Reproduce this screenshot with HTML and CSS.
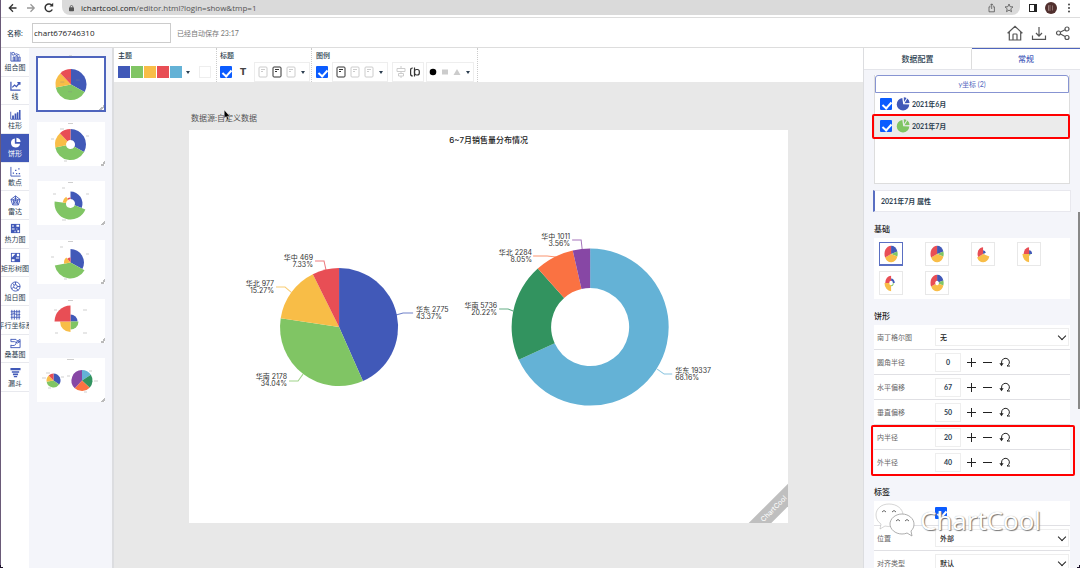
FILE: index.html
```
<!DOCTYPE html>
<html lang="zh-CN">
<head>
<meta charset="utf-8">
<title>ChartCool</title>
<link rel="stylesheet" href="styles.css">
</head>
<body>
<svg class="defs" aria-hidden="true">
  <symbol id="undo" viewBox="0 0 12 10"><path d="M2.600 7.500V5A3.900 3.900 0 1 1 9.500 7.700L8 9h3" fill="none" stroke="#222" stroke-width="1"/><path d="M.4 6.300h4.200L2.500 9.300z" fill="#222"/></symbol>
  <symbol id="doc" viewBox="0 0 10 12"><rect x="1" y="1" width="8" height="10" rx="1" fill="none" stroke="currentColor"/><path d="M3 3.500h4M3 5.500h2" stroke="currentColor"/></symbol>
  <symbol id="pieicon" viewBox="0 0 14 14"><path d="M6.300 1A6.300 6.300 0 1 0 13.300 7.600L7.200 7.200z" fill="currentColor"/><path d="M7.800.3a6 6 0 0 1 2.800.8L8 5zM11.400 1.600a6 6 0 0 1 2.200 4.400L8.500 6.200z" fill="currentColor"/></symbol>
</svg>

<div class="browser">
  <svg class="nav-icons" viewBox="0 0 60 16"><g fill="none" stroke="#333" stroke-width="1.300"><path d="M16.500 8H9.500M13 4.300L9.300 8l3.700 3.700"/><path stroke="#999" d="M27 8h7M30.500 4.300L34.200 8l-3.700 3.700"/><path d="M52 5.400A3.800 3.800 0 1 0 52.300 9.500" stroke-width="1.500"/></g><path d="M49.500 6.500h3.700V2.800z" fill="#333"/></svg>
  <div class="address">
    <svg class="lock" viewBox="0 0 6 8"><rect y="3" width="6" height="5" rx="1" fill="#555"/><path d="M1.500 3.500v-1a1.500 1.500 0 0 1 3 0v1" fill="none" stroke="#555"/></svg>
    <span class="url"><b>ichartcool.com</b>/editor.html?login=show&amp;tmp=1</span>
    <svg class="addr-icons" viewBox="0 0 26 10"><g fill="none" stroke="#555" stroke-width=".8"><path d="M2.500 3.800H1v5h5.400v-5H5M3.700 6V1M2.200 2.400L3.700.8l1.500 1.600"/><path d="M21 1l1.100 2.700 2.900.2-2.200 1.900.7 2.900L21 7.100l-2.500 1.600.7-2.900L17 3.900l2.900-.2z"/></g></svg>
  </div>
  <svg class="browser-end" viewBox="0 0 60 16"><rect x="9.500" y="4.500" width="7" height="7" fill="none" stroke="#222"/><path d="M14 4h3v8h-3z" fill="#222"/><circle cx="31" cy="8" r="6" fill="#51302e"/><path d="M28 6h3M28 8h3M28 10h3M32.500 5.500v5M28.500 5.500v5" stroke="#b59a98" stroke-width=".6"/><g fill="#444"><circle cx="49" cy="4.500" r="1"/><circle cx="49" cy="8" r="1"/><circle cx="49" cy="11.500" r="1"/></g></svg>
</div>

<header class="header">
  <label class="name-label" for="name">名称:</label>
  <input class="name-input" id="name" type="text" value="chart676746310">
  <span class="saved">已经自动保存 23:17</span>
  <div class="header-actions">
    <button type="button" aria-label="首页"><svg viewBox="0 0 16 16"><path d="M.6 8.200L8 1.300l7.400 6.900M2.300 7v8h11.400V7M6 15v-5.200q0-.8.8-.8h2.400q.8 0 .8.800V15" fill="none" stroke="#555" stroke-width="1.200"/></svg></button>
    <button type="button" aria-label="下载"><svg viewBox="0 0 16 16"><path d="M8 2v9M5 8l3 3.200L11 8M1.500 10.500v3.800h13v-3.800" fill="none" stroke="#555" stroke-width="1.200"/></svg></button>
    <button type="button" aria-label="分享"><svg viewBox="0 0 16 16"><g fill="none" stroke="#555" stroke-width="1.200"><circle cx="3.500" cy="8" r="2"/><circle cx="12" cy="4" r="2"/><circle cx="12" cy="12.500" r="2"/><path d="M5.500 7l4.600-2.200M5.500 9l4.600 2.500"/></g></svg></button>
  </div>
</header>

<div class="workspace">
  <nav class="types">
    <a href="#combo"><svg viewBox="0 0 12 12"><path d="M1 1v10h10.500M3.500 11V6.500h1.500V11M6.500 11V5H8v6M9.500 11V6.500H11V11" /><circle cx="3.500" cy="3" r="1.500"/><path d="M5 4l2-1 3.500 1.500"/></svg>组合图</a>
    <a href="#line"><svg viewBox="0 0 12 12"><path stroke-width="1.400" d="M1 2v9h10.500M2.500 8l2.500-2.500 2 1.800L10.500 3M8 2.800h2.800v2.500"/></svg>线</a>
    <a href="#bar"><svg viewBox="0 0 12 12"><path d="M.8 3v8.200h11"/><path class="solid" d="M2.300 7h2v4h-2zM5 5h2v6H5zM7.500 3.500h1.700V11H7.500zM9.800 1h1.700v10H9.800z"/></svg>柱形</a>
    <a class="active" href="#pie"><svg viewBox="0 0 12 12"><path class="solid" d="M5.300 1.500A5 5 0 1 0 11 7.300H5.300zM7 .7a5 5 0 0 1 4.500 4.800H7z"/></svg>饼形</a>
    <a href="#scatter"><svg viewBox="0 0 12 12"><path d="M1 1v10h10.500"/><path class="solid" d="M3 7h1.400v1.400H3zM5.500 4H7v1.400H5.500zM6.500 7.500h1.400v1.400H6.500zM9 2.500h1.400v1.400H9zM9.500 7.500H11v1.400H9.500z"/></svg>散点</a>
    <a href="#radar"><svg viewBox="0 0 12 12"><path d="M6 1l5 3.800-1.900 6H2.900L1 4.800zM6 3.500l2.700 2-1 3.300H4.300l-1-3.300zM6 1v5M1 4.800L6 6l5-1.200M2.900 10.800L6 6l3.100 4.800"/></svg>雷达</a>
    <a href="#heat"><svg viewBox="0 0 12 12"><path class="solid" d="M1 1h10v10H1z"/><path class="hole" d="M2.500 2.500H4V4H2.500zM7 2h3v2H7zM2 6h3v1H2zM7 6h1v1H7zM5 8.500h1V10H5zM8 8h2v2H8z"/></svg>热力图</a>
    <a href="#treemap"><svg viewBox="0 0 12 12"><path class="solid" d="M1 1h10v10H1z"/><path class="hole" d="M2 2h4L2 6zM7.500 2H10v2.500H7.500zM2 8h3v2H2zM6.500 6H10v1.200H6.500z"/></svg>矩形树图</a>
    <a href="#sunburst"><svg viewBox="0 0 12 12"><circle cx="6" cy="6" r="5"/><circle cx="6" cy="6" r="2"/><path d="M6 1v3M11 6H8M7 8l2 2.500M4 7L1.500 8.500M4.500 4.500L3 2.500"/></svg>旭日图</a>
    <a href="#parallel"><svg viewBox="0 0 12 12"><path d="M2 1v10.500M4.700 1v10.500M7.400 1v10.500M10 1v10.500M.8 3h10.400M.8 6l4-1 3 1.500 3.400-.5M.8 9h10.400"/></svg><span>平行坐标系</span></a>
    <a href="#sankey"><svg viewBox="0 0 12 12"><path d="M1 1.500h5.500Q8 4 11 4M1 4h4q3 3 6 0M1 10.500h10M1 8q5 1 5.500-2T11 1.500v9M1 1v3M1 7.500V11"/></svg>桑基图</a>
    <a href="#funnel"><svg viewBox="0 0 12 12"><path class="solid" d="M.5 1h11v2.500H.5zM2 4.500h8v1.800H2zM3.200 7.200h5.600V9H3.200zM4.200 9.800h3.600v1.500H4.200z"/></svg>漏斗</a>
  </nav>

  <aside class="thumbs">
    <button type="button" class="thumb selected" aria-label="饼图"><svg viewBox="0 0 68 44"><g data-pie="34,22.500,0" data-slices="33,#4159b8,16;39,#80c564,16;16,#f8bd47,16;12,#e84e55,16"/><path class="ticks" d="M39 18h4M23 20h4M31 30h4M30 16h3M32 -7h3"/></svg></button>
    <button type="button" class="thumb" aria-label="环图"><svg viewBox="0 0 68 44"><g data-pie="33.500,22.500,4.500" data-slices="33,#4159b8,15.500;39,#80c564,15.500;16,#f8bd47,15.500;12,#e84e55,15.500"/><path class="ticks" d="M31 1.500h5M23 7h4M49 14h3M14 17h3M27 39h3"/></svg></button>
    <button type="button" class="thumb" aria-label="玫瑰环图"><svg viewBox="0 0 68 44"><g data-pie="33.500,22.500,4.500" data-slices="31,#4159b8,12;46,#80c564,16;14,#f8bd47,8;9,#e84e55,6"/><path class="ticks" d="M31 1.500h5M25 7h3M49 13h3M16 13h3M25 39h4"/></svg></button>
    <button type="button" class="thumb" aria-label="玫瑰图"><svg viewBox="0 0 68 44"><g data-pie="33.500,22.500,0" data-slices="33,#4159b8,13.500;39,#80c564,16;17,#f8bd47,6.500;11,#e84e55,5"/><path class="ticks" d="M31 1.500h5M23 7h3M49 14h3M14 17h3M27 39h3"/></svg></button>
    <button type="button" class="thumb" aria-label="等角玫瑰图"><svg viewBox="0 0 68 44"><g data-pie="33.500,22.500,0" data-slices="25,#4159b8,7;25,#80c564,8;25,#f8bd47,10.500;25,#e84e55,16"/><path class="ticks" d="M31 1.500h5M17 11h3M46 11h4M18 34h3M46 34h4"/></svg></button>
    <button type="button" class="thumb" aria-label="多饼图"><svg viewBox="0 0 68 44"><g data-pie="16.500,22.500,0" data-slices="35,#4159b8,7;37,#80c564,7;16,#f8bd47,7;12,#e84e55,7"/><g data-pie="45,22.500,0" data-slices="16,#64b2d6,10.500;21,#32935f,10.500;25,#fa7242,10.500;38,#8747a5,10.500"/><path class="ticks" d="M30 1.500h7M9 15h4M5 20h4M11 30h3M24 19h3M30 18h3M52 13h3M57 23h4M47 34h3"/></svg></button>
  </aside>

  <main class="editor">
    <div class="toolbar">
      <section class="tool-group">
        <h2>主题</h2>
        <div class="tools theme">
          <i class="swatch blue"></i><i class="swatch green"></i><i class="swatch yellow"></i><i class="swatch red"></i><i class="swatch sky"></i>
          <i class="caret"></i><i class="swatch blank"></i>
        </div>
      </section>
      <section class="tool-group title-group">
        <h2>标题</h2>
        <div class="tools">
          <input type="checkbox" checked aria-label="标题">
          <b class="letter">T</b>
          <div class="box"><svg class="faint"><use href="#doc"/></svg><svg><use href="#doc"/></svg><svg class="faint"><use href="#doc"/></svg><i class="caret"></i></div>
        </div>
      </section>
      <section class="tool-group legend-group">
        <h2>图例</h2>
        <div class="tools">
          <input type="checkbox" checked aria-label="图例">
          <div class="box"><svg><use href="#doc"/></svg><svg class="faint"><use href="#doc"/></svg><svg class="faint"><use href="#doc"/></svg><i class="caret"></i></div>
          <div class="box"><svg class="faint" viewBox="0 0 10 12"><path d="M1 2.500h8v3H1zM2.500 7.500h5v2.500h-5zM5 0v2.500M5 5.500v2M5 10v2" fill="none" stroke="currentColor"/></svg><svg viewBox="0 0 10 12"><path d="M2.800 2Q.6 2 .6 4v4q0 2 2.200 2M4.500 1.500v9" fill="none" stroke="currentColor" stroke-width="1.200"/><rect x="4.500" y="3.500" width="4.800" height="5.500" rx="2" fill="none" stroke="currentColor" stroke-width="1.200"/></svg></div>
          <div class="box shapes"><svg viewBox="0 0 10 12"><circle cx="4" cy="6" r="3.300"/></svg><svg class="faint" viewBox="0 0 10 12"><rect x="1" y="3.500" width="6" height="5" fill="currentColor"/></svg><svg class="faint" viewBox="0 0 10 12"><path d="M4 3l3.500 6h-7z" fill="currentColor"/></svg><i class="caret"></i></div>
        </div>
      </section>
    </div>

    <div class="stage">
      <p class="source">数据源:自定义数据</p>
      <svg class="cursor" viewBox="0 0 8 12"><path d="M1 0v9l2-2 1.500 4 1.500-.6L4.500 6.700H7z" fill="#000" stroke="#fff" stroke-width=".4"/></svg>
      <div class="paper">
        <svg class="chart" viewBox="0 0 599 393" role="img" aria-label="6~7月销售量分布情况">
          <text class="chart-title" x="299.500" y="13">6~7月销售量分布情况</text>
          <g data-pie="150,197,0" data-slices="43.370,#4159b8,59;34.040,#80c564,59;15.270,#f8bd47,59;7.330,#e84e55,59"/>
          <g data-pie="401,197,39" data-slices="68.160,#64b2d6,78.500;20.220,#32935f,78.500;8.050,#fa7242,78.500;3.560,#8747a5,78.500"/>
          <g class="leaders">
            <path stroke="#4159b8" d="M207 185l7-2h10"/><path stroke="#80c564" d="M114 244l-5 7h-9"/><path stroke="#f8bd47" d="M102 162l-6-5h-9"/><path stroke="#e84e55" d="M137 140l-2-9h-9"/>
            <path stroke="#64b2d6" d="M468 239l7 5h8"/><path stroke="#32935f" d="M324 181l-5-2h-9"/><path stroke="#fa7242" d="M367 127l-9-1h-14"/><path stroke="#8747a5" d="M393 119l-1-9h-9"/>
          </g>
          <g class="labels">
            <text x="227" y="182">华东 2775</text><text x="227" y="189">43.37%</text>
            <text x="486" y="243">华东 19337</text><text x="486" y="250">68.16%</text>
          </g>
          <g class="labels end">
            <text x="124" y="130">华中 469</text><text x="124" y="137">7.33%</text>
            <text x="85" y="156">华北 977</text><text x="85" y="163">15.27%</text>
            <text x="98" y="249">华南 2178</text><text x="98" y="256">34.04%</text>
            <text x="381" y="109">华中 1011</text><text x="381" y="116">3.56%</text>
            <text x="343" y="125">华北 2284</text><text x="343" y="132">8.05%</text>
            <text x="308" y="178">华南 5736</text><text x="308" y="185">20.22%</text>
          </g>
        </svg>
        <div class="ribbon"><span>ChartCool</span></div>
      </div>
    </div>
  </main>

  <aside class="panel">
    <div class="tabs"><button type="button">数据配置</button><button type="button" class="current">常规</button></div>
    <div class="panel-body">
      <div class="series">
        <button type="button" class="axis">y坐标 (2)</button>
        <label class="series-row"><input type="checkbox" checked><svg class="c-blue"><use href="#pieicon"/></svg>2021年6月</label>
        <label class="series-row marked"><input type="checkbox" checked><svg class="c-green"><use href="#pieicon"/></svg>2021年7月</label>
      </div>
      <h2 class="props">2021年7月 属性</h2>

      <h3>基础</h3>
      <div class="presets">
        <button type="button" class="selected" aria-label="样式1"><svg viewBox="0 0 24 24"><g transform="translate(2.500) scale(.8 1)" data-pie="12,12,0" data-slices="20,#4159b8,9;10,#80c564,9;38,#f8bd47,9;32,#e84e55,9"/></svg></button>
        <button type="button" aria-label="样式2"><svg viewBox="0 0 24 24"><g transform="translate(2.500) scale(.8 1)" data-pie="12,12,0" data-slices="20,#4159b8,9;10,#80c564,9;38,#f8bd47,9;32,#e84e55,9"/></svg></button>
        <button type="button" aria-label="样式3"><svg viewBox="0 0 24 24"><g transform="translate(2.500) scale(.8 1)" data-pie="12,12,0" data-slices="20,#4159b8,4;10,#80c564,2;38,#f8bd47,9;32,#e84e55,7.500"/></svg></button>
        <button type="button" aria-label="样式4"><svg viewBox="0 0 24 24"><g transform="translate(2.500) scale(.8 1)" data-pie="12,12,0" data-slices="25,#4159b8,4;25,#80c564,2;25,#f8bd47,9;25,#e84e55,7.500"/></svg></button>
        <button type="button" aria-label="样式5"><svg viewBox="0 0 24 24"><g transform="translate(2.500) scale(.8 1)" data-pie="12,12,2.500" data-slices="25,#4159b8,5;25,#80c564,3.500;25,#f8bd47,9;25,#e84e55,8"/></svg></button>
        <button type="button" aria-label="样式6"><svg viewBox="0 0 24 24"><g transform="translate(2.500) scale(.8 1)" data-pie="12,12,2.500" data-slices="20,#4159b8,9;10,#80c564,9;38,#f8bd47,9;32,#e84e55,9"/></svg></button>
      </div>

      <h3>饼形</h3>
      <div class="fields">
        <div class="field"><label for="rose">南丁格尔图</label><div class="select"><select id="rose"><option>无</option></select></div></div>
        <div class="field"><label for="corner">圆角半径</label><input id="corner" type="text" value="0"><button type="button" aria-label="增加" class="plus"></button><button type="button" aria-label="减少" class="minus"></button><button type="button" aria-label="重置" class="reset"><svg><use href="#undo"/></svg></button></div>
        <div class="field"><label for="dx">水平偏移</label><input id="dx" type="text" value="67"><button type="button" aria-label="增加" class="plus"></button><button type="button" aria-label="减少" class="minus"></button><button type="button" aria-label="重置" class="reset"><svg><use href="#undo"/></svg></button></div>
        <div class="field"><label for="dy">垂直偏移</label><input id="dy" type="text" value="50"><button type="button" aria-label="增加" class="plus"></button><button type="button" aria-label="减少" class="minus"></button><button type="button" aria-label="重置" class="reset"><svg><use href="#undo"/></svg></button></div>
        <div class="marked-fields">
          <div class="field"><label for="inner">内半径</label><input id="inner" type="text" value="20"><button type="button" aria-label="增加" class="plus"></button><button type="button" aria-label="减少" class="minus"></button><button type="button" aria-label="重置" class="reset"><svg><use href="#undo"/></svg></button></div>
          <div class="field"><label for="outer">外半径</label><input id="outer" type="text" value="40"><button type="button" aria-label="增加" class="plus"></button><button type="button" aria-label="减少" class="minus"></button><button type="button" aria-label="重置" class="reset"><svg><use href="#undo"/></svg></button></div>
        </div>
      </div>

      <h3>标签</h3>
      <div class="fields">
        <div class="field"><label class="dim" for="show">显示</label><input id="show" type="checkbox" checked></div>
        <div class="field"><label for="pos">位置</label><div class="select"><select id="pos"><option>外部</option></select></div></div>
        <div class="field"><label for="align">对齐类型</label><div class="select"><select id="align"><option>默认</option></select></div></div>
        <div class="watermark">
          <svg viewBox="0 0 42 36"><g fill="#fff" stroke="#999" stroke-width=".8"><path d="M15 2C7 2 2 7 2 13c0 4 2 7 5 9l-1 5 5-3q3 1 7 0C27 23 29 18 29 13 29 7 23 2 15 2z" stroke-opacity=".5"/><path d="M28 12c-7 0-12 5-12 10s5 10 12 10q3 0 5-1l5 3-1-5c2-2 3-4 3-7 0-5-5-10-12-10z"/></g><path d="M8 10q2-3 4 0M18 10q2-3 4 0M22 19q2-3 4 0M31 19q2-3 4 0" fill="none" stroke="#666"/></svg>
          <span>ChartCool</span>
        </div>
      </div>
    </div>
    <i class="scroll-thumb"></i>
  </aside>
</div>
<i class="corner left"></i><i class="corner right"></i>
<script src="charts.js"></script>
</body>
</html>
```
FILE: styles.css
```
* { box-sizing: border-box; }
body {
  margin: 0;
  height: 100vh;
  overflow: hidden;
  display: flex;
  flex-direction: column;
  background: #fff;
  border-left: 1px solid #6a5a78;
  color: #2c3e50;
  font: 7px/10px Lato, "Noto Sans CJK SC", sans-serif;
}
h2, h3, p { margin: 0; font-size: 7px; }
button, input, select { font: inherit; color: inherit; margin: 0; padding: 0; border: 0; background: none; }
a { color: inherit; text-decoration: none; }
svg { display: block; flex: none; }
.defs { position: absolute; width: 0; height: 0; }

.browser { flex: none; display: flex; height: 18px; padding-bottom: 2px; border-bottom: 1px solid #ddd; }
.nav-icons { width: 60px; height: 16px; margin-left: -1px; }
.address { flex: 1; display: flex; align-items: center; gap: 7px; padding: 0 6px 0 7px; margin-left: 2px; background: #dadada; border-radius: 0 0 8px 8px; }
.lock { width: 5px; height: 8px; }
.url { flex: 1; font: 8px/12px "Open Sans", sans-serif; color: #555; }
.url b { font-weight: 500; color: #222; }
.addr-icons { width: 26px; height: 10px; }
.browser-end { width: 60px; height: 16px; }

.header { flex: none; display: flex; align-items: center; height: 30px; padding: 0 9px 0 6px; border-bottom: 1px solid #ddd; }
.name-label { width: 25px; font-weight: 500; }
.name-input { width: 139px; height: 20px; padding: 0 1px; border: 1px solid #ccc; font: 8px/12px "Open Sans", sans-serif; color: #222; }
.saved { margin-left: 6px; color: #777; }
.header-actions { margin-left: auto; display: flex; gap: 8px; }
.header-actions svg { width: 16px; height: 16px; }

.workspace { flex: 1; min-height: 0; display: flex; }
.types { flex: none; width: 28px; height: 344px; display: grid; grid-auto-rows: 1fr; overflow: hidden; }
.types a { display: flex; flex-direction: column; align-items: center; justify-content: center; gap: 1px; line-height: 9px; white-space: nowrap; border-bottom: 1px solid #e8e9ee; min-width: 0; }
.types svg { width: 11px; height: 11px; fill: none; stroke: #4159b8; }
.types .solid { fill: #4159b8; stroke: none; }
.types .hole { fill: #fff; stroke: none; }
.types .active { background: #4159b8; color: #fff; }
.types .active .solid { fill: #fff; }

.thumbs { flex: none; width: 85px; padding: 8px 6px 8px 7px; background: #f4f5fa; border-right: 2px solid #dcdde0; display: flex; flex-direction: column; align-items: center; gap: 15px; }
.thumb { position: relative; width: 68px; height: 44px; background: #fff; }
.thumb svg { width: 68px; height: 44px; overflow: visible; }
.thumb::after { content: ""; position: absolute; right: 0; bottom: 0; width: 5px; height: 5px; background: linear-gradient(135deg, transparent 50%, #bbb 50%, #bbb 80%, transparent 80%); }
.thumb.selected { width: 70px; height: 56px; margin-bottom: -5px; border: 2px solid #4f65bd; }
.thumb.selected svg { width: 66px; height: 52px; }
.ticks { fill: none; stroke: #888; stroke-width: 1; opacity: .4; }

.editor { flex: 1; min-width: 0; display: flex; flex-direction: column; background: #e8e8e8; }
.toolbar { flex: none; display: flex; height: 34px; background: #fff; }
.tool-group { width: 103px; padding: 3px 0 0 4px; border-right: 1px dotted #ccc; }
.tool-group h2 { font-weight: 500; line-height: 9px; }
.title-group { width: 95px; padding-left: 3px; }
.legend-group { width: 166px; }
.tools { display: flex; align-items: center; height: 24px; margin-right: 1px; }
.theme { gap: 1px; }
.swatch { width: 12px; height: 12px; }
.blue { background: #4159b8; } .green { background: #80c564; } .yellow { background: #f8bd47; } .red { background: #e84e55; } .sky { background: #64b2d6; }
.blank { border: 1px solid #eee; margin-left: 6px; }
.caret { flex: none; width: 0; margin: 0 1px; border: 2px solid transparent; border-top: 3px solid #2c3e50; border-bottom: 0; }
.theme .caret { margin: 0 2px 0 3px; }
input[type=checkbox] { appearance: none; position: relative; flex: none; width: 12px; height: 12px; background: #0b5cff; border-radius: 1px; }
input[type=checkbox]::after { content: ""; position: absolute; left: 4px; top: 2px; width: 4px; height: 7px; border: solid #fff; border-width: 0 2px 2px 0; transform: rotate(42deg); }
.letter { width: 23px; text-align: center; font: bold 9px/12px "DejaVu Sans", sans-serif; color: #444; }
.box { display: flex; align-items: center; gap: 4px; height: 20px; padding: 0 3px; border: 1px solid #eee; color: #333; }
.legend-group .box { margin-left: 4px; }
.box svg { width: 10px; height: 12px; }
.legend-group .box.shapes { gap: 2px; padding: 0 2px; margin-left: 2px; }
.box .faint { color: #ccc; }

.stage { flex: 1; position: relative; padding: 31px 10% 0; }
.source { height: 17px; padding-left: 2px; font-size: 8px; color: #555; }
.cursor { position: absolute; left: 109px; top: 28px; width: 8px; height: 11px; }
.paper { position: relative; overflow: hidden; background: #fff; }
.chart { width: 100%; height: auto; }
.chart text { font-family: Inter, "Noto Sans CJK SC", sans-serif; font-size: 7px; fill: #333; }
.chart .chart-title { font-size: 8px; font-weight: 500; text-anchor: middle; fill: #222; }
.labels.end { text-anchor: end; }
.leaders { fill: none; stroke-width: 1; opacity: .75; }
.ribbon { position: absolute; right: -28px; bottom: 6px; width: 84px; height: 16px; background: #bfbfbf; color: #fff; text-align: center; font: 7px/16px Inter, sans-serif; transform: rotate(-45deg); }

.panel { flex: none; position: relative; width: 217px; background: #f4f5fa; border-left: 1px solid #dcdde0; overflow: hidden; }
.tabs { display: grid; grid-template-columns: 1fr 1fr; height: 22px; background: #fff; border-bottom: 1px solid #e4e5ea; }
.tabs button { font: 500 8px/12px "Noto Sans CJK SC", sans-serif; border-right: 1px solid #ddd; border-top: 2px solid transparent; padding-bottom: 2px; }
.tabs .current { color: #4f65bd; border-top-color: #4f65bd; border-right: 0; margin-top: -1px; padding-bottom: 0; }
.panel-body { padding: 5px 10px 0 10px; }
.series { height: 109px; background: #fff; border: 1px solid #ddd; border-top: 0; }
.axis { display: block; width: 100%; height: 18px; border: 1px solid #8794d2; border-radius: 3px 3px 0 0; color: #4f65bd; }
.series-row { position: relative; display: flex; align-items: center; gap: 4px; height: 22px; padding-left: 5px; font-weight: 700; }
.series-row svg { width: 14px; height: 14px; margin-right: -2px; }
.c-blue { color: #4159b8; } .c-green { color: #80c564; }
.marked { background: #ebebeb; }
.marked::after { content: ""; position: absolute; inset: -1px -1px -2px -3px; border: 2px solid #f00; border-radius: 2px; }
.props { height: 22px; margin: 6px -1px 0; padding-left: 6px; line-height: 20px; background: #fff; border: 1px solid #e8e8ee; border-left: 2px solid #5a6fc2; }
h3 { margin: 11px 0 0; height: 15px; font: 500 8px/12px "Noto Sans CJK SC", sans-serif; color: #222; }
.presets { display: grid; grid-template-columns: repeat(4, 24px); gap: 5px 22px; padding: 4px 5px; background: #fff; }
.presets button { width: 24px; height: 24px; border: 1px solid #e8e8e8; }
.presets .selected { border-color: #5a6fc2; border-bottom-width: 2px; }
.presets svg { width: 22px; height: 22px; }
.fields { position: relative; background: #fff; }
.field { display: flex; align-items: center; height: 25px; padding: 0 1px 0 3px; border-bottom: 1px solid #e0e0e4; }
.field label { width: 58px; color: #666; }
.field input[type=text] { width: 26px; height: 19px; border: 1px solid #eee; text-align: center; font-weight: 700; }
.select { flex: 1; position: relative; }
.select::after { content: ""; position: absolute; right: 4px; top: 5px; width: 5px; height: 5px; border: solid #222; border-width: 0 1px 1px 0; transform: rotate(45deg); pointer-events: none; }
.select select { display: block; appearance: none; width: 100%; height: 18px; padding-left: 4px; border: 1px solid #eee; color: #222; font-weight: 500; }
.field .dim { opacity: .3; }
.plus, .minus { width: 9px; height: 9px; margin-left: 6px; background: linear-gradient(#222, #222) center / 9px 1px no-repeat; }
.plus { background: linear-gradient(#222, #222) center / 9px 1px no-repeat, linear-gradient(#222, #222) center / 1px 9px no-repeat; }
.minus { margin-left: 7px; }
.reset { margin-left: 7px; }
.reset svg { width: 12px; height: 10px; }
.marked-fields { position: relative; }
.marked-fields::after { content: ""; position: absolute; inset: 0 -5px -1px -3px; border: 2px solid #f00; border-radius: 2px; }
.watermark { position: absolute; left: 0; top: 1px; display: flex; align-items: center; gap: 4px; color: #fff; font: 26px/36px "Open Sans", sans-serif; text-shadow: 1px 1px 1px #777, 0 0 1px #aaa; }
.watermark svg { width: 42px; height: 36px; }
.scroll-thumb { position: absolute; right: 0; top: 164px; width: 2px; height: 197px; background: #888; }
.corner { position: absolute; bottom: 0; width: 5px; height: 5px; }
.corner.left { left: 0; background: radial-gradient(circle at 100% 0, transparent 5px, #1a1028 5px); }
.corner.right { right: 0; background: radial-gradient(circle at 0 0, transparent 5px, #1a1028 5px); }
```
FILE: charts.js
```
// Draws pie, ring and rose charts from "cx,cy,inner" and "share,color,radius" attributes.
const NS = 'http://www.w3.org/2000/svg';
document.querySelectorAll('[data-pie]').forEach((group) => {
  const [cx, cy, inner] = group.dataset.pie.split(',').map(Number);
  const slices = group.dataset.slices.split(';').map((s) => s.split(','));
  const total = slices.reduce((sum, s) => sum + Number(s[0]), 0);
  const point = (radius, turn) => {
    const a = turn * 2 * Math.PI;
    return `${cx + radius * Math.sin(a)} ${cy - radius * Math.cos(a)}`;
  };
  let start = 0;
  slices.forEach(([share, color, r]) => {
    const end = start + share / total;
    const large = end - start > 0.5 ? 1 : 0;
    const path = document.createElementNS(NS, 'path');
    path.setAttribute('d', `M${point(inner, start)}L${point(r, start)}A${r} ${r} 0 ${large} 1 ${point(r, end)}L${point(inner, end)}A${inner} ${inner} 0 ${large} 0 ${point(inner, start)}Z`);
    path.setAttribute('fill', color);
    group.appendChild(path);
    start = end;
  });
});
```
